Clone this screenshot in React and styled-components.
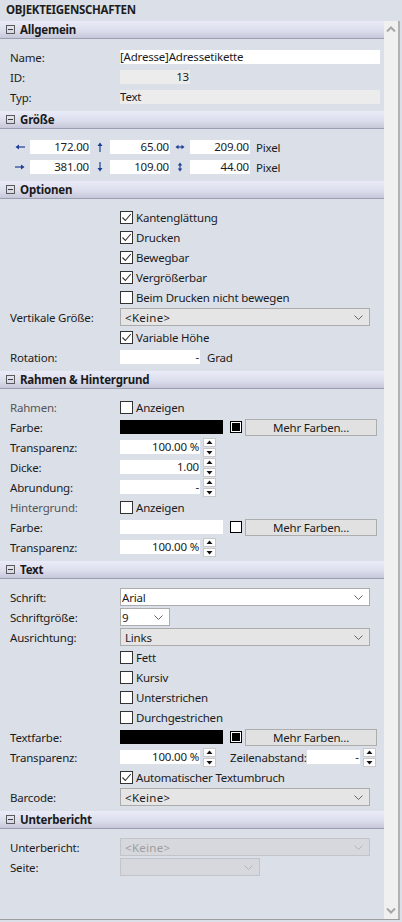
import { Fragment } from "react";
import styled, { createGlobalStyle } from "styled-components";

const Global = createGlobalStyle`
  html, body {
    margin: 0;
    padding: 0;
    background: #dbdfe7;
  }
  body {
    font-family: "Noto Sans", "Open Sans", sans-serif;
    font-size: 11.5px;
    letter-spacing: -0.2px;
    color: #1c1c1c;
  }
`;

const Panel = styled.div`
  width: 402px;
  height: 922px;
  display: flex;
  flex-direction: column;
  background: #dbdfe7;
  overflow: hidden;
`;
const Title = styled.div`
  height: 21px;
  line-height: 19px;
  padding-left: 6px;
  font-weight: 700;
  font-size: 11.5px;
  color: #1e1e1e;
  letter-spacing: -0.3px;
`;
const Main = styled.div`
  flex: 1;
  display: flex;
  border-bottom: 1px solid #9d9d9d;
  margin-bottom: 2px;
  margin-right: 2px;
`;
const Content = styled.div`
  flex: 1;
  min-width: 0;
`;
const Scrollbar = styled.div`
  width: 14px;
  background: #f0f0f0;
  border-right: 2px solid #b2b2b2;
  display: flex;
  flex-direction: column;
  justify-content: space-between;
  align-items: center;
  padding: 5px 0;
`;
const Header = styled.div`
  height: 17px;
  display: flex;
  align-items: center;
  gap: 5px;
  padding-left: 6px;
  font-weight: 700;
  font-size: 11.5px;
  color: #1a1a1a;
  background: linear-gradient(#ebecf8, #dcdded 55%, #c6c8d9);
  border-bottom: 1px solid #9c9eb1;
`;
const Minus = styled.span`
  width: 7px;
  height: 7px;
  border: 1px solid #5a5a5a;
  position: relative;
  &::after {
    content: "";
    position: absolute;
    left: 1px;
    right: 1px;
    top: 3px;
    height: 1px;
    background: #3a3a3a;
  }
`;
const Body = styled.div`
  padding: 8px 4px 4px 10px;
`;
const Row = styled.div`
  height: 20px;
  display: grid;
  grid-template-columns: 110px 1fr;
  align-items: center;
`;
const Label = styled.div`
  color: ${(p) => (p.$muted ? "#555555" : "#1c1c1c")};
  white-space: nowrap;
`;
const Cell = styled.div`
  display: flex;
  align-items: center;
  min-width: 0;
`;
const Field = styled.div`
  width: ${(p) => p.$w || "260px"};
  height: 14px;
  line-height: 14px;
  background: ${(p) => p.$bg || "#ffffff"};
  text-align: ${(p) => (p.$right ? "right" : "left")};
  padding-right: ${(p) => (p.$right ? "1px" : "0")};
  box-sizing: border-box;
  white-space: nowrap;
  overflow: hidden;
  flex-shrink: 0;
`;
const Select = styled.div`
  width: ${(p) => p.$w || "250px"};
  height: 18px;
  box-sizing: border-box;
  border: 1px solid ${(p) => (p.$disabled ? "#c3c4c8" : "#acacac")};
  background: ${(p) => p.$bg};
  color: ${(p) => (p.$disabled ? "#9d9d9d" : "#1c1c1c")};
  display: flex;
  align-items: center;
  justify-content: space-between;
  padding: 0 6px 0 ${(p) => p.$pad || "4px"};
  letter-spacing: ${(p) => (p.$wide ? "0.3px" : "-0.2px")};
`;
const Check = styled.span`
  width: 13px;
  height: 13px;
  box-sizing: border-box;
  border: 1px solid #333333;
  background: #ffffff;
  display: inline-flex;
  align-items: center;
  justify-content: center;
  margin-right: 3px;
  flex-shrink: 0;
`;
const SizeRow = styled.div`
  height: 20px;
  display: grid;
  grid-template-columns: 20px 60px 20px 60px 20px 60px auto;
  align-items: center;
`;
const ArrowCell = styled.div`
  display: flex;
  justify-content: center;
  align-items: center;
`;
const Unit = styled.span`
  margin-left: 6px;
`;
const Spin = styled.div`
  width: 13px;
  height: 19px;
  margin-left: 3px;
  display: flex;
  flex-direction: column;
  gap: 1px;
  flex-shrink: 0;
`;
const SpinHalf = styled.div`
  flex: 1;
  background: #ffffff;
  border: 1px solid #c9c9c9;
  display: flex;
  align-items: center;
  justify-content: center;
`;
const Swatch = styled.span`
  width: 12px;
  height: 12px;
  box-sizing: border-box;
  border: 1px solid #000000;
  background: #ffffff;
  margin-left: 7px;
  display: flex;
  align-items: center;
  justify-content: center;
  flex-shrink: 0;
  &::after {
    content: "";
    width: 8px;
    height: 8px;
    background: ${(p) => p.$color};
  }
`;
const Button = styled.div`
  width: 132px;
  height: 17px;
  margin-left: 3px;
  box-sizing: border-box;
  border: 1px solid #adadad;
  background: #e1e1e1;
  display: flex;
  align-items: center;
  justify-content: center;
  flex-shrink: 0;
`;
const After = styled.span`
  margin-left: ${(p) => p.$gap || "7px"};
  white-space: nowrap;
`;

const Chevron = ({ color = "#666" }) => (
  <svg width="9" height="5" viewBox="0 0 9 5">
    <path d="M0.5 0.5 L4.5 4.5 L8.5 0.5" fill="none" stroke={color} strokeWidth="1" />
  </svg>
);

const Tick = () => (
  <svg width="11" height="11" viewBox="0 0 11 11">
    <path d="M1.5 5.5 L4.3 8.5 L9.8 2" fill="none" stroke="#333" strokeWidth="1.1" />
  </svg>
);

const Arrow = ({ dir }) => {
  const c = "#1d3e96";
  const shapes = {
    left: (
      <>
        <path d="M3 5 H10" stroke={c} strokeWidth="1.2" />
        <path d="M0.5 5 L4 2.5 L4 7.5 Z" fill={c} />
      </>
    ),
    right: (
      <>
        <path d="M0 5 H7" stroke={c} strokeWidth="1.2" />
        <path d="M9.5 5 L6 2.5 L6 7.5 Z" fill={c} />
      </>
    ),
    up: (
      <>
        <path d="M5 3 V10" stroke={c} strokeWidth="1.2" />
        <path d="M5 0.5 L2.5 4 L7.5 4 Z" fill={c} />
      </>
    ),
    down: (
      <>
        <path d="M5 0 V7" stroke={c} strokeWidth="1.2" />
        <path d="M5 9.5 L2.5 6 L7.5 6 Z" fill={c} />
      </>
    ),
    lr: (
      <>
        <path d="M3 5 H7" stroke={c} strokeWidth="1.2" />
        <path d="M0.5 5 L3.5 2.8 L3.5 7.2 Z" fill={c} />
        <path d="M9.5 5 L6.5 2.8 L6.5 7.2 Z" fill={c} />
      </>
    ),
    ud: (
      <>
        <path d="M5 3 V7" stroke={c} strokeWidth="1.2" />
        <path d="M5 0.5 L2.8 3.5 L7.2 3.5 Z" fill={c} />
        <path d="M5 9.5 L2.8 6.5 L7.2 6.5 Z" fill={c} />
      </>
    ),
  };
  return (
    <svg width="10" height="10" viewBox="0 0 10 10">
      {shapes[dir]}
    </svg>
  );
};

const SpinBox = () => (
  <Spin>
    <SpinHalf>
      <svg width="7" height="5" viewBox="0 0 7 5">
        <path d="M3.5 0.5 L6.5 4 L0.5 4 Z" fill="#111" />
      </svg>
    </SpinHalf>
    <SpinHalf>
      <svg width="7" height="5" viewBox="0 0 7 5">
        <path d="M3.5 4.5 L6.5 1 L0.5 1 Z" fill="#111" />
      </svg>
    </SpinHalf>
  </Spin>
);

const Section = ({ title, children }) => (
  <>
    <Header>
      <Minus />
      {title}
    </Header>
    <Body>{children}</Body>
  </>
);

const Prop = ({ label, muted, children }) => (
  <Row>
    <Label $muted={muted}>{label}</Label>
    <Cell>{children}</Cell>
  </Row>
);

const CheckProp = ({ label = "", text, checked, muted }) => (
  <Prop label={label} muted={muted}>
    <Check>{checked && <Tick />}</Check>
    {text}
  </Prop>
);

const Dropdown = ({ value, w, bg = "#e5e5e5", disabled, wide, pad }) => (
  <Select $w={w} $bg={bg} $disabled={disabled} $wide={wide} $pad={pad}>
    <span>{value}</span>
    <Chevron color={disabled ? "#b4b4b8" : "#666"} />
  </Select>
);

const ColorProp = ({ label, color }) => (
  <Prop label={label}>
    <Field $w="103px" $bg={color} />
    <Swatch $color={color} />
    <Button>Mehr Farben...</Button>
  </Prop>
);

const NumberProp = ({ label, value, children }) => (
  <Prop label={label}>
    <Field $w="80px" $right>
      {value}
    </Field>
    <SpinBox />
    {children}
  </Prop>
);

const sizes = [
  [
    ["left", "172.00"],
    ["up", "65.00"],
    ["lr", "209.00"],
  ],
  [
    ["right", "381.00"],
    ["down", "109.00"],
    ["ud", "44.00"],
  ],
];

export default function App() {
  return (
    <Panel>
      <Global />
      <Title>OBJEKTEIGENSCHAFTEN</Title>
      <Main>
        <Content>
          <Section title="Allgemein">
            <Prop label="Name:">
              <Field>[Adresse]Adressetikette</Field>
            </Prop>
            <Prop label="ID:">
              <Field $w="70px" $bg="#ececec" $right>
                13
              </Field>
            </Prop>
            <Prop label="Typ:">
              <Field $bg="#ececec">Text</Field>
            </Prop>
          </Section>

          <Section title="Größe">
            {sizes.map((row, i) => (
              <SizeRow key={i}>
                {row.map(([dir, v]) => (
                  <Fragment key={dir}>
                    <ArrowCell>
                      <Arrow dir={dir} />
                    </ArrowCell>
                    <Field $w="60px" $right>
                      {v}
                    </Field>
                  </Fragment>
                ))}
                <Unit>Pixel</Unit>
              </SizeRow>
            ))}
          </Section>

          <Section title="Optionen">
            <CheckProp text="Kantenglättung" checked />
            <CheckProp text="Drucken" checked />
            <CheckProp text="Bewegbar" checked />
            <CheckProp text="Vergrößerbar" checked />
            <CheckProp text="Beim Drucken nicht bewegen" />
            <Prop label="Vertikale Größe:">
              <Dropdown value="<Keine>" wide />
            </Prop>
            <CheckProp text="Variable Höhe" checked />
            <Prop label="Rotation:">
              <Field $w="80px" $right>
                -
              </Field>
              <After>Grad</After>
            </Prop>
          </Section>

          <Section title="Rahmen & Hintergrund">
            <CheckProp label="Rahmen:" muted text="Anzeigen" />
            <ColorProp label="Farbe:" color="#000000" />
            <NumberProp label="Transparenz:" value="100.00 %" />
            <NumberProp label="Dicke:" value="1.00" />
            <NumberProp label="Abrundung:" value="-" />
            <CheckProp label="Hintergrund:" muted text="Anzeigen" />
            <ColorProp label="Farbe:" color="#ffffff" />
            <NumberProp label="Transparenz:" value="100.00 %" />
          </Section>

          <Section title="Text">
            <Prop label="Schrift:">
              <Dropdown value="Arial" bg="#ffffff" pad="1px" />
            </Prop>
            <Prop label="Schriftgröße:">
              <Dropdown value="9" w="50px" bg="#ffffff" pad="1px" />
            </Prop>
            <Prop label="Ausrichtung:">
              <Dropdown value="Links" />
            </Prop>
            <CheckProp text="Fett" />
            <CheckProp text="Kursiv" />
            <CheckProp text="Unterstrichen" />
            <CheckProp text="Durchgestrichen" />
            <ColorProp label="Textfarbe:" color="#000000" />
            <NumberProp label="Transparenz:" value="100.00 %">
              <After $gap="14px">Zeilenabstand:</After>
              <Field $w="53px" $right>
                -
              </Field>
              <SpinBox />
            </NumberProp>
            <CheckProp text="Automatischer Textumbruch" checked />
            <Prop label="Barcode:">
              <Dropdown value="<Keine>" wide />
            </Prop>
          </Section>

          <Section title="Unterbericht">
            <Prop label="Unterbericht:">
              <Dropdown value="<Keine>" bg="#d6d8de" disabled wide />
            </Prop>
            <Prop label="Seite:">
              <Dropdown value="" w="140px" bg="#d6d8de" disabled />
            </Prop>
          </Section>
        </Content>
        <Scrollbar>
          <svg width="10" height="6" viewBox="0 0 10 6">
            <path d="M1 5.5 L5 1.5 L9 5.5" fill="none" stroke="#a6a6a6" strokeWidth="2" />
          </svg>
          <svg width="10" height="6" viewBox="0 0 10 6">
            <path d="M1 0.5 L5 4.5 L9 0.5" fill="none" stroke="#a6a6a6" strokeWidth="2" />
          </svg>
        </Scrollbar>
      </Main>
    </Panel>
  );
}
